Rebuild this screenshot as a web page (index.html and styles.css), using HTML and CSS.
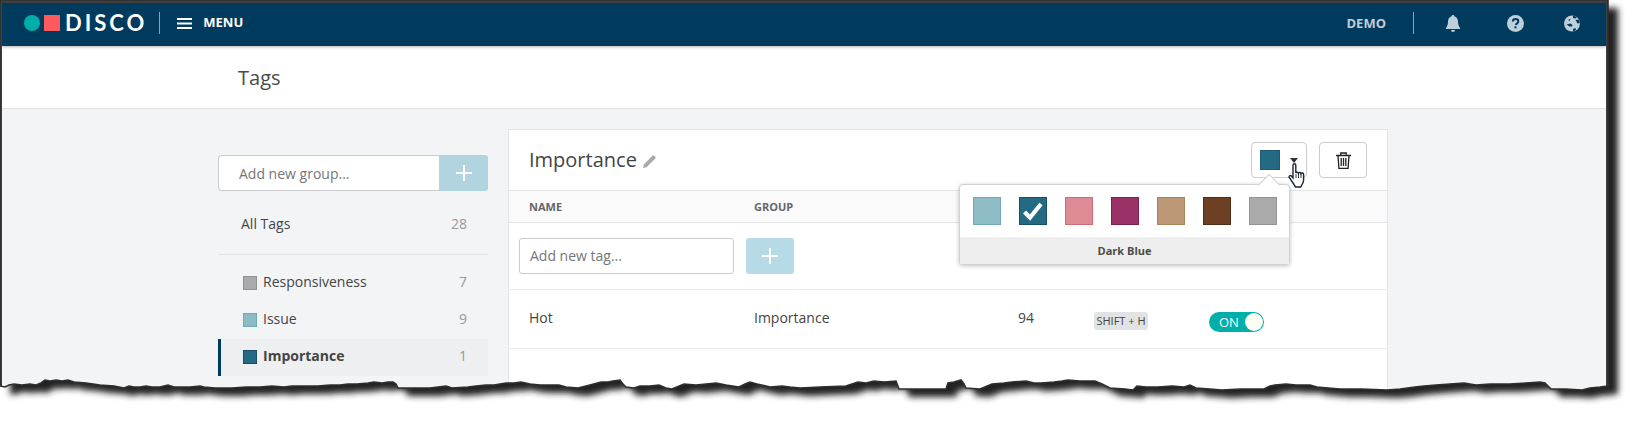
FILE: index.html
```html
<!DOCTYPE html>
<html lang="en">
<head>
<meta charset="utf-8">
<title>Tags</title>
<link rel="stylesheet" href="styles.css">
</head>
<body>
<div class="frame">
  <header class="topbar">
    <span class="logo-dot"></span>
    <span class="logo-square"></span>
    <span class="logo-text">DISCO</span>
    <span class="bar-divider"></span>
    <svg class="burger" width="15" height="11" viewBox="0 0 15 11"><path d="M0 1h15M0 5.500h15M0 10h15" stroke="#fff" stroke-width="2"/></svg>
    <span class="menu-label">MENU</span>
    <span class="demo-label">DEMO</span>
    <span class="bar-divider demo-divider"></span>
    <svg class="icon-bell" width="14" height="17" viewBox="0 0 14 17"><path fill="#bccfdb" d="M7 0c.8 0 1.300.5 1.300 1.300C10.800 1.900 12 4 12 6.500c0 3.500 1 5 2 6.500v1H0v-1c1-1.500 2-3 2-6.500C2 4 3.200 1.900 5.700 1.300 5.700.5 6.200 0 7 0zM5 15h4a2 2 0 0 1-4 0z"/></svg>
    <svg class="icon-help" width="17" height="17" viewBox="0 0 17 17"><circle cx="8.500" cy="8.500" r="8.500" fill="#bccfdb"/><path d="M5.800 6.500c.1-1.700 1.200-2.500 2.800-2.500 1.500 0 2.700.9 2.700 2.300 0 2.100-2.300 2-2.300 3.700" fill="none" stroke="#003a5d" stroke-width="2"/><rect x="7.500" y="11.300" width="2" height="2" fill="#003a5d"/></svg>
    <svg class="icon-globe" width="16" height="17" viewBox="0 0 16 17"><circle cx="8" cy="8.500" r="8" fill="#bccfdb"/><path fill="#003a5d" d="M9 .5l4 1.500-1.500 1.500L9 3zM11.500 5l3-.5L16 8l-2.500.5zM2.500 9.500l4-1 2 1.500-.5 1.500H5.500zM9 14l2.500-1 .5 1.500-2 2-1-1zM5 4l1.500.5-1 1.500-1-.5z"/></svg>
  </header>

  <div class="titlebar"><h1 class="page-title">Tags</h1></div>

  <div class="content">
    <aside class="sidebar">
      <div class="group-form">
        <input class="group-input" type="text" placeholder="Add new group...">
        <span class="add-btn add-btn-group"><svg width="16" height="16" viewBox="0 0 16 16"><path d="M8 0v16M0 8h16" stroke="#fff" stroke-width="2"/></svg></span>
      </div>
      <div class="all-tags"><span>All Tags</span><span class="count">28</span></div>
      <ul class="group-list">
        <li class="group-item"><span class="chip chip-gray"></span><span class="group-name">Responsiveness</span><span class="count">7</span></li>
        <li class="group-item"><span class="chip chip-teal"></span><span class="group-name">Issue</span><span class="count">9</span></li>
        <li class="group-item group-active"><span class="chip chip-blue"></span><span class="group-name">Importance</span><span class="count">1</span></li>
      </ul>
    </aside>

    <main class="card">
      <div class="card-head">
        <h2 class="card-title">Importance</h2>
        <svg class="icon-pencil" width="13" height="13" viewBox="0 0 13 13"><path fill="#aaa" d="M0 13l.8-3.600L9.600.6c.5-.5 1-.5 1.500 0l1.300 1.300c.5.5.5 1 0 1.500L3.600 12.200z"/></svg>
        <button class="tool-btn color-btn"><span class="color-current"></span><span class="caret"></span></button>
        <button class="tool-btn trash-btn">
          <svg width="15" height="17" viewBox="0 0 15 17"><path d="M0 3.500h15M4.800 3.500V1h5.400v2.500M2 3.500l.9 12.800h9.200L13 3.500M5.200 6v8M7.500 6v8M9.800 6v8" fill="none" stroke="#222" stroke-width="1.300"/></svg>
        </button>

        <div class="color-pop">
          <div class="swatches">
            <span class="swatch sw-teal"></span>
            <span class="swatch sw-blue"><svg width="22" height="20" viewBox="0 0 22 20"><path d="M2.500 11l5.500 5.500L19 3" fill="none" stroke="#fff" stroke-width="4.200"/></svg></span>
            <span class="swatch sw-pink"></span>
            <span class="swatch sw-plum"></span>
            <span class="swatch sw-tan"></span>
            <span class="swatch sw-brown"></span>
            <span class="swatch sw-gray"></span>
          </div>
          <div class="pop-label">Dark Blue</div>
        </div>

        <svg class="hand" width="20" height="26" viewBox="0 0 20 26"><path fill="#fff" stroke="#1c2530" stroke-width="1.400" d="M5 2.200C5 1.300 5.600.7 6.400.7S7.800 1.300 7.800 2.200V10c.3-1 2.300-1 2.600.2.300-1 2.300-1 2.600.3.400-.9 2.400-.7 2.600.5V17c0 3-1.600 5-3 7H7.500C6.500 22.500 5.500 20.500 4 18.500L1.300 14.500C.5 13 2.300 11.800 3.400 13L5 14.800z"/><path d="M8 11v4M10.500 11v4M13 11v4" stroke="#1c2530" stroke-width=".9"/></svg>
      </div>

      <div class="row row-head"><span>NAME</span><span>GROUP</span></div>
      <div class="new-tag">
        <input class="tag-input" type="text" placeholder="Add new tag...">
        <span class="add-btn add-btn-tag"><svg width="16" height="16" viewBox="0 0 16 16"><path d="M8 0v16M0 8h16" stroke="#fff" stroke-width="2"/></svg></span>
      </div>
      <div class="row row-tag">
        <span>Hot</span>
        <span>Importance</span>
        <span>94</span>
        <kbd class="shortcut">SHIFT + H</kbd>
        <span class="toggle"><span class="toggle-text">ON</span><span class="toggle-knob"></span></span>
      </div>
    </main>
  </div>
</div>

<svg class="torn" width="1648" height="427" viewBox="0 0 1648 427" aria-hidden="true">
  <defs>
    <polygon id="edge" points="0,386 5,387 9,385 14,384 22,385 30,384 36,385 41,383 45,380 50,381 56,380 62,381 68,380 74,382 86,383 100,385 114,386 124,388 129,386 134,387 140,387 146,386 152,387 160,387 168,385 174,387 190,387 200,386 204,387 215,388 232,388 246,387 260,387 272,386 284,387 292,386 304,386 318,386 330,385 340,385 348,384 357,384 368,383 374,382 382,383 388,382 393,382 396,384 398,388 420,388 430,388 438,387 446,386 452,388 468,387 476,386 486,385 494,385 500,384 506,383 514,383 521,382 530,384 540,385 559,385 566,387 578,388 590,385 601,382 608,382 613,381 620,380 623,384 626,387 634,388 640,386 650,386 659,385 666,388 672,389 684,384 696,385 706,384 716,383 726,385 739,387 745,384 750,382 757,384 770,387 782,386 790,387 800,388 820,387 846,386 852,384 858,382 866,383 874,381 884,382 896,381 899,389 925,389 946,389 948,383 954,382 961,380 964,384 966,388 980,389 992,384 1004,383 1012,382 1026,381 1034,383 1041,383 1054,382 1062,381 1068,380 1080,381 1088,381 1095,381 1102,384 1110,388 1125,389 1133,390 1137,386 1146,387 1158,387 1172,386 1184,387 1190,385 1196,388 1210,389 1222,390 1240,389 1264,389 1270,386 1275,385 1286,384 1296,385 1310,385 1317,387 1340,389 1362,389 1387,390 1400,389 1415,387 1424,386 1436,385 1450,384 1464,383 1476,385 1490,384 1510,384 1526,383 1540,382 1545,383 1551,389 1566,389 1582,390 1590,388 1600,387 1608,386 1608,0 0,0"/>
    <mask id="outside" maskUnits="userSpaceOnUse" x="0" y="0" width="1648" height="427">
      <rect width="1648" height="427" fill="#fff"/>
      <use href="#edge" fill="#000"/>
    </mask>
    <filter id="soft" x="-5%" y="-5%" width="110%" height="115%">
      <feGaussianBlur stdDeviation="3"/>
    </filter>
  </defs>
  <rect width="1648" height="427" fill="#fff" mask="url(#outside)"/>
  <g mask="url(#outside)">
    <use href="#edge" fill="#222" transform="translate(10 8)" filter="url(#soft)"/>
  </g>
  <use href="#edge" fill="none" stroke="#2f2f2f" stroke-width="1.600"/>
</svg>
</body>
</html>
```
FILE: styles.css
```css
* { box-sizing: border-box; }

html, body {
  margin: 0;
  height: 427px;
  overflow: hidden;
  background: #fff;
}

body {
  position: relative;
  font-family: "Open Sans", "Liberation Sans", sans-serif;
  font-size: 14px;
  color: #444;
}

.frame {
  width: 1608px;
  height: 427px;
  border-top: 3px solid #404040;
  border-left: 2px solid #404040;
  border-right: 2px solid #404040;
  background: #f3f4f6;
  overflow: hidden;
}

/* top bar */
.topbar {
  position: relative;
  display: flex;
  align-items: center;
  height: 43px;
  padding: 0 0 3px 22px;
  background: #003a5d;
  box-shadow: 0 1px 3px rgba(0, 0, 0, .3);
  color: #fff;
}

.logo-dot {
  width: 16px;
  height: 16px;
  border-radius: 50%;
  background: #00afa9;
}

.logo-square {
  width: 16px;
  height: 16px;
  margin-left: 4px;
  background: #ff5a5f;
}

.logo-text {
  margin-left: 5px;
  font-family: Lato, "Open Sans", sans-serif;
  font-size: 22px;
  font-weight: 700;
  letter-spacing: 3px;
  line-height: 1;
}

.bar-divider {
  width: 1px;
  height: 22px;
  margin-left: 12px;
  background: #8aa4b5;
}

.burger { margin-left: 17px; }

.menu-label {
  margin-left: 11px;
  margin-bottom: 2px;
  font-size: 13px;
  font-weight: 700;
}

.demo-label {
  margin-left: auto;
  font-size: 13px;
  font-weight: 700;
  color: #bccfdb;
}

.demo-divider { margin-left: 27px; }

.icon-bell { margin-left: 32px; }
.icon-help { margin-left: 47px; }
.icon-globe { margin-left: 40px; margin-right: 26px; }

/* title */
.titlebar {
  height: 63px;
  padding: 18px 0 0 236px;
  background: #fff;
  border-bottom: 1px solid #e1e3e6;
}

.page-title {
  margin: 0;
  font-size: 20px;
  font-weight: 400;
  line-height: 27px;
  color: #4a4a4a;
}

/* content */
.content {
  display: flex;
  gap: 20px;
  padding-left: 216px;
  height: 320px;
}

.sidebar {
  width: 270px;
  padding-top: 46px;
  flex: none;
}

.group-form {
  display: flex;
  height: 36px;
}

.group-input, .tag-input {
  border: 1px solid #c9cbce;
  background: #fff;
  font-family: inherit;
  font-size: 14px;
  color: #444;
  outline: none;
}

.group-input::placeholder, .tag-input::placeholder {
  color: #767676;
  opacity: 1;
}

.group-input {
  width: 221px;
  padding: 0 0 0 20px;
  border-right: 0;
  border-radius: 4px 0 0 4px;
}

.add-btn {
  display: flex;
  align-items: center;
  justify-content: center;
  width: 48px;
  height: 36px;
}

.add-btn-group {
  width: 49px;
  background: #b2d4e0;
  border-radius: 0 3px 3px 0;
}

.add-btn-tag {
  background: #b6dbe7;
  border-radius: 3px;
}

.all-tags {
  display: flex;
  justify-content: space-between;
  align-items: center;
  height: 49px;
  margin-top: 15px;
  padding: 0 21px 13px 23px;
  border-bottom: 1px solid #e1e3e6;
}

.count { color: #999; }

.group-list {
  margin: 10px 0 0;
  padding: 0;
  list-style: none;
}

.group-item {
  display: flex;
  align-items: center;
  height: 37px;
  padding: 0 21px 1px 22px;
  border-left: 3px solid transparent;
}

.group-name {
  flex: 1;
  margin-left: 6px;
}

.group-name, .group-item .count {
  margin-top: -3px;
}

.group-active {
  border-left-color: #003a5d;
  background: #eeeff1;
}

.group-active .group-name {
  font-weight: 700;
}

.chip {
  width: 14px;
  height: 14px;
  border: 1px solid;
}

.chip-gray { background: #aaa; border-color: #919191; }
.chip-teal { background: #8dbcc7; border-color: #6fa9b5; }
.chip-blue { background: #246a82; border-color: #174f66; }

/* card */
.card {
  width: 880px;
  height: 300px;
  margin-top: 20px;
  background: #fff;
  border: 1px solid #e3e5e8;
}

.card-head {
  position: relative;
  display: flex;
  align-items: center;
  height: 61px;
  padding: 0 20px;
  border-bottom: 1px solid #e3e5e8;
}

.card-title {
  margin: -1px 0 0;
  font-size: 20px;
  font-weight: 400;
  line-height: 27px;
  color: #444;
}

.icon-pencil { margin-left: 6px; margin-top: 2px; }

.tool-btn {
  height: 36px;
  padding: 0;
  display: flex;
  align-items: center;
  background: #fff;
  border: 1px solid #c9cbce;
  border-radius: 4px;
}

.color-btn {
  width: 56px;
  margin-left: auto;
  padding-left: 8px;
}

.color-current {
  width: 20px;
  height: 20px;
  background: #246a82;
  border: 1px solid #1a5a72;
}

.caret {
  margin-left: 10px;
  margin-top: 1px;
  border-left: 4px solid transparent;
  border-right: 4px solid transparent;
  border-top: 5px solid #333;
}

.trash-btn {
  width: 48px;
  margin-left: 12px;
  justify-content: center;
}

.color-pop {
  position: absolute;
  top: 54px;
  left: 450px;
  width: 331px;
  height: 81px;
  background: #fff;
  border: 1px solid #d0d1d3;
  border-radius: 4px;
  box-shadow: 0 1px 4px rgba(0, 0, 0, .25);
}

.color-pop::before {
  content: "";
  position: absolute;
  top: -8px;
  left: 301px;
  width: 15px;
  height: 15px;
  background: #fff;
  border-top: 1px solid #d0d1d3;
  border-left: 1px solid #d0d1d3;
  transform: rotate(45deg);
}

.swatches {
  position: relative;
  display: flex;
  gap: 18px;
  height: 52px;
  padding: 12px 0 0 13px;
}

.swatch {
  display: flex;
  align-items: center;
  justify-content: center;
  width: 28px;
  height: 28px;
  border: 1px solid;
}

.sw-teal { background: #8dbcc7; border-color: #6fa9b5; }
.sw-blue { background: #246a82; border-color: #174f66; }
.sw-pink { background: #de8b95; border-color: #cf6a77; }
.sw-plum { background: #9a3268; border-color: #7d2353; }
.sw-tan { background: #bd9877; border-color: #ab8357; }
.sw-brown { background: #6e4023; border-color: #4f2c15; }
.sw-gray { background: #aaa; border-color: #939393; }

.pop-label {
  height: 27px;
  background: #eee;
  font-size: 11px;
  font-weight: 700;
  line-height: 27px;
  text-align: center;
  color: #4a4a4a;
}

.hand {
  position: absolute;
  top: 33px;
  left: 779px;
}

/* table */
.row {
  display: grid;
  grid-template-columns: 225px 264px 76px 115px 1fr;
  align-items: center;
  padding-left: 20px;
}

.row-head {
  height: 32px;
  background: #fafafa;
  border-bottom: 1px solid #e3e5e8;
  font-size: 11px;
  font-weight: 700;
  color: #666;
}

.new-tag {
  display: flex;
  gap: 13px;
  height: 67px;
  padding: 15px 0 15px 10px;
  border-bottom: 1px solid #eaebed;
}

.tag-input {
  width: 215px;
  height: 36px;
  padding: 0 0 1px 10px;
  border-radius: 3px;
}

.add-btn-tag { margin-left: -1px; }

.row-tag {
  height: 59px;
  padding-bottom: 4px;
  border-bottom: 1px solid #eaebed;
}

.shortcut {
  justify-self: start;
  width: 54px;
  height: 18px;
  margin-top: 8px;
  background: #e2e3e5;
  border-radius: 3px;
  font-family: inherit;
  font-size: 11px;
  line-height: 18px;
  text-align: center;
  color: #444;
}

.toggle {
  display: flex;
  align-items: center;
  justify-content: space-between;
  justify-self: start;
  width: 55px;
  height: 20px;
  margin-top: 10px;
  padding: 0 1px 0 10px;
  background: #00afa9;
  border-radius: 10px;
}

.toggle-text {
  font-size: 13px;
  line-height: 20px;
  color: #fff;
}

.toggle-knob {
  width: 18px;
  height: 18px;
  background: #fdfff5;
  border-radius: 50%;
}

/* torn paper edge laid over the whole capture */
.torn {
  position: absolute;
  top: 0;
  left: 0;
  pointer-events: none;
}
```
